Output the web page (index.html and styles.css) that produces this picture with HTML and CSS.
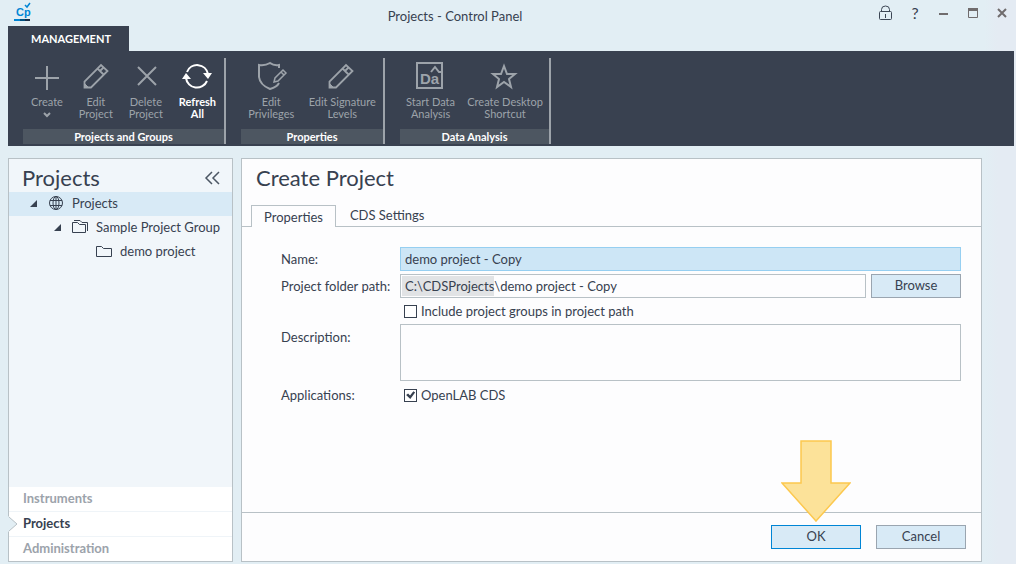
FILE: index.html
```
<!DOCTYPE html>
<html lang="en">
<head>
  <meta charset="UTF-8">
  <title>Projects - Control Panel</title>
  <link rel="stylesheet" href="styles.css">
</head>
<body>
  <header class="titlebar">
    <svg class="logo" width="18" height="18" viewBox="0 0 18 18">
      <text class="logoText" x="2" y="11">Cp</text>
      <path d="M11 0l2 2 3-4" fill="none" stroke="#0085d5" stroke-width="1.500"/>
      <path d="M0 14h16v2H0z" fill="#0085d5"/>
      <path d="M6 14h5v2H6z" fill="#00507f"/>
      <path d="M11 14h5v2h-5z" fill="#1a2c45"/>
    </svg>
    <div class="windowTitle">Projects - Control Panel</div>
    <div class="windowButtons">
      <button type="button" aria-label="Lock">
        <svg width="14" height="16" viewBox="0 0 14 16" fill="none" stroke="#3c4654">
          <rect x="1.500" y="6.500" width="12" height="8" rx="1"/>
          <path d="M3.500 6V4.500a4 3.500 0 0 1 8 0V6M7.500 9v4"/>
        </svg>
      </button>
      <button type="button" class="help" aria-label="Help">?</button>
      <button type="button" aria-label="Minimize">
        <svg width="12" height="12" viewBox="0 0 12 12"><path d="M1 6h9v2H1z" fill="#706c6d"/></svg>
      </button>
      <button type="button" aria-label="Maximize">
        <svg width="12" height="12" viewBox="0 0 12 12" fill="none" stroke="#706c6d"><path d="M1.500 1.500h9v9h-9z"/><path d="M1 2.500h10" stroke-width="3"/></svg>
      </button>
      <button type="button" aria-label="Close">
        <svg width="12" height="12" viewBox="0 0 12 12" stroke="#706c6d" stroke-width="2"><path d="M2 2l8 8M10 2l-8 8"/></svg>
      </button>
    </div>
  </header>

  <div class="ribbonTab">MANAGEMENT</div>
  <div class="ribbon">
    <section class="group">
      <div class="tools">
        <button type="button" class="tool">
          <svg width="28" height="28" viewBox="0 0 28 28"><path d="M14 4v24M2 16h24" stroke-width="2"/></svg>
          Create
          <svg class="caret" width="8" height="12" viewBox="0 0 8 12"><path d="M1 5l3 3 3-3" stroke-width="2"/></svg>
        </button>
        <button type="button" class="tool">
          <svg width="28" height="28" viewBox="0 0 28 28"><path d="M2.500 25.500v-6L19 3l6.500 6L9 25.500zM15.500 6.500l6 6M18 9l3-3" stroke-width="1.800"/><path d="M2.500 25.500v-4l4 4z" fill="#9da3aa"/></svg>
          Edit<br>Project
        </button>
        <button type="button" class="tool">
          <svg width="28" height="28" viewBox="0 0 28 28"><path d="M6 5l18 18M24 5L6 23" stroke-width="2"/></svg>
          Delete<br>Project
        </button>
        <button type="button" class="tool active">
          <svg width="28" height="28" viewBox="0 0 28 28"><path d="M4 10A11 11 0 0 1 25 12M24 19A11 11 0 0 1 3 16" stroke-width="2"/><path class="solid" d="M-1 17l4-6 5 6zM20 11h9l-4 6z"/></svg>
          Refresh<br>All
        </button>
      </div>
      <h2>Projects and Groups</h2>
    </section>
    <section class="group properties">
      <div class="tools">
        <button type="button" class="tool">
          <svg width="28" height="28" viewBox="0 0 28 28"><path d="M22 6V3Q17 4 13 1Q8 4 2 3V15Q3 23 13 27Q20 25 22 21" stroke-width="2"/><path d="M17 20l1-4 8-8 3 3-8 8zM24 10l3 3" stroke-width="1.500"/></svg>
          Edit<br>Privileges
        </button>
        <button type="button" class="tool">
          <svg width="28" height="28" viewBox="0 0 28 28"><path d="M1.500 25.500v-6L18 3l6.500 6L8 25.500zM14.500 6.500l6 6M17 9l3-3" stroke-width="1.800"/><path d="M1.500 25.500v-4l4 4z" fill="#9da3aa"/></svg>
          Edit Signature<br>Levels
        </button>
      </div>
      <h2>Properties</h2>
    </section>
    <section class="group analysis">
      <div class="tools">
        <button type="button" class="tool">
          <svg width="28" height="28" viewBox="0 0 28 28"><path d="M0 1h25v25H0zM14 10l4-5 4 5h3" stroke-width="2"/><text class="daText" x="3" y="22">Da</text></svg>
          Start Data<br>Analysis
        </button>
        <button type="button" class="tool">
          <svg width="28" height="28" viewBox="0 0 28 28"><path d="M13 4l3 8h8l-6 5 2 8-7-5-7 5 2-8-6-5h8z" stroke-width="2"/></svg>
          Create Desktop<br>Shortcut
        </button>
      </div>
      <h2>Data Analysis</h2>
    </section>
  </div>

  <div class="content">
    <aside class="sidebar">
      <div class="sidebarHeader">
        <h1>Projects</h1>
        <button type="button" class="collapse" aria-label="Collapse">
          <svg width="16" height="14" viewBox="0 0 16 14" fill="none" stroke="#4b5663" stroke-width="1.500"><path d="M8 1L2 7l6 6M15 1L9 7l6 6"/></svg>
        </button>
      </div>
      <ul class="tree">
        <li class="selected">
          <svg class="expander" width="8" height="8" viewBox="0 0 8 8"><path d="M8 1v7H1z"/></svg>
          <svg width="16" height="16" viewBox="0 0 16 16"><circle cx="8" cy="8" r="6.500"/><ellipse cx="8" cy="8" rx="3" ry="6.500"/><path d="M8 1v14M2 5.500h12M2 10.500h12"/></svg>
          <span>Projects</span>
        </li>
        <li class="level2">
          <svg class="expander" width="8" height="8" viewBox="0 0 8 8"><path d="M8 1v7H1z"/></svg>
          <svg width="16" height="16" viewBox="0 0 16 16"><path d="M.5 3.500h5l2 2h6v8H.5zM2 1.500h6l2 2h5.500V12"/></svg>
          <span>Sample Project Group</span>
        </li>
        <li class="level3">
          <svg width="16" height="16" viewBox="0 0 16 16"><path d="M.5 3.500h5l2 2h8v8H.5z"/></svg>
          <span>demo project</span>
        </li>
      </ul>
      <nav class="sections">
        <a href="#instruments">Instruments</a>
        <a href="#projects" class="current">
          <svg class="notch" width="11" height="16" viewBox="0 0 11 16"><path d="M0 0L9 8 0 16z" fill="#e2eef4"/><path d="M1 1l8 7-8 7" fill="none" stroke="#b8c1c6"/></svg>
          Projects
        </a>
        <a href="#administration">Administration</a>
      </nav>
    </aside>

    <main class="panel">
      <h1>Create Project</h1>
      <div class="tabs" role="tablist">
        <button type="button" role="tab" aria-selected="true" class="tab selected">Properties</button>
        <button type="button" role="tab" aria-selected="false" class="tab">CDS Settings</button>
      </div>
      <form class="form">
        <label for="name">Name:</label>
        <input class="field name" id="name" type="text" value="demo project - Copy">

        <label for="path">Project folder path:</label>
        <div class="pathRow">
          <div class="field path">
            <span>C:\CDSProjects</span>
            <input id="path" type="text" value="\demo project - Copy">
          </div>
          <button type="button" class="button">Browse</button>
        </div>

        <div class="check include">
          <input id="include" type="checkbox">
          <label for="include">Include project groups in project path</label>
        </div>

        <label class="descriptionLabel" for="description">Description:</label>
        <textarea class="field" id="description"></textarea>

        <span>Applications:</span>
        <div class="check">
          <input id="openlab" type="checkbox" checked>
          <label for="openlab">OpenLAB CDS</label>
        </div>
      </form>
      <footer class="actions">
        <div class="okBox">
          <svg class="pointer" width="70" height="82" viewBox="0 0 70 82"><path d="M20 1h30v42h19L35 81 1 43h19z" fill="#fce299" stroke="#fcc84e" stroke-width="1.500"/></svg>
          <button type="button" class="button primary">OK</button>
        </div>
        <button type="button" class="button">Cancel</button>
      </footer>
    </main>
  </div>
</body>
</html>
```
FILE: styles.css
```
* {
    box-sizing: border-box;
}

body {
    font-family: Lato, "Liberation Sans", sans-serif;
    font-size: 13px;
    line-height: 16px;
    color: #374150;
    margin: 0;
    min-height: 100vh;
    display: flex;
    flex-direction: column;
    background: linear-gradient(to left, #e4ebf3 18px, #e2eef4 32px);
}

h1, h2, ul {
    margin: 0;
    padding: 0;
}

h1 {
    font-size: 22px;
    line-height: 28px;
    font-weight: normal;
}

button, input, textarea {
    font: inherit;
    color: inherit;
}

button {
    padding: 0;
    border: none;
    background: none;
}

/* title bar */
.titlebar {
    display: flex;
    align-items: center;
    height: 26px;
    padding: 0 8px 0 14px;
}

.logo {
    margin-top: 2px;
    overflow: visible;
}

.logoText {
    font: bold 11px "Liberation Sans", sans-serif;
    fill: #0085d5;
}

.windowTitle {
    flex: 1;
    padding-top: 6px;
    text-align: center;
}

.windowButtons {
    display: flex;
    align-items: center;
    gap: 17px;
}

.windowButtons button {
    display: flex;
}

.help {
    font-size: 16px;
    width: 12px;
    justify-content: center;
}

/* ribbon */
.ribbonTab {
    align-self: flex-start;
    margin-left: 8px;
    padding: 5px 18px 4px 23px;
    font-size: 11px;
    font-weight: bold;
    color: white;
    background-color: #394150;
}

.ribbon {
    display: flex;
    gap: 15px;
    margin: 0 2px 12px 8px;
    padding: 7px 15px 2px;
    background-color: #394150;
}

.group {
    width: 203px;
    border-right: 2px solid #9da3aa;
}

.group.properties {
    width: 144px;
}

.group.analysis {
    width: 151px;
}

.group h2 {
    font-size: 11px;
    line-height: 15px;
    text-align: center;
    color: white;
    background-color: #4d5661;
}

.tools {
    display: flex;
    justify-content: space-around;
    height: 71px;
}

.tool {
    display: block;
    padding-top: 4px;
    font-size: 11px;
    line-height: 12px;
    white-space: nowrap;
    color: #9da3aa;
    align-self: flex-start;
}

.tool svg {
    display: block;
    margin: 0 auto 6px;
    overflow: visible;
    fill: none;
    stroke: #9da3aa;
}

.tool .caret {
    margin: 0 auto;
}

.tool.active {
    color: white;
    font-weight: bold;
}

.tool.active svg {
    stroke: white;
}

.tool .solid {
    fill: white;
    stroke: none;
}

.daText {
    font: bold 15px "Liberation Sans", sans-serif;
    fill: #9da3aa;
    stroke: none;
}

/* main area */
.content {
    flex: 1;
    display: flex;
    gap: 8px;
    padding: 0 34px 2px 8px;
}

.sidebar {
    display: flex;
    flex-direction: column;
    width: 225px;
    border: 1px solid #b8c1c6;
    background-color: #f1f6fa;
}

.sidebarHeader {
    display: flex;
    justify-content: space-between;
    align-items: center;
    padding: 5px 12px 0 13px;
}

.collapse {
    display: flex;
}

.tree {
    flex: 1;
    list-style: none;
}

.tree li {
    display: flex;
    align-items: center;
    gap: 8px;
    height: 24px;
    padding: 0 0 2px 19px;
}

.tree li.selected {
    background-color: #d8eaf6;
}

.tree li.level2 {
    padding-left: 43px;
}

.tree li.level3 {
    padding-left: 87px;
}

.tree svg {
    fill: none;
    stroke: #374150;
}

.tree .expander {
    margin: 0 3px 0 1px;
    fill: #374150;
    stroke: none;
}

.sections {
    background-color: white;
}

.sections a {
    display: block;
    position: relative;
    height: 25px;
    padding: 3px 14px;
    font-weight: bold;
    text-decoration: none;
    color: #9ca3ab;
    border-bottom: 1px solid #eff4f8;
}

.sections a:last-child {
    height: 24px;
    border-bottom: none;
}

.sections a.current {
    color: #374150;
}

.notch {
    position: absolute;
    left: -1px;
    top: 4px;
}

.panel {
    flex: 1;
    display: flex;
    flex-direction: column;
    border: 1px solid #b8c1c6;
    background-color: #fdfdfe;
}

.panel h1 {
    padding: 5px 14px 13px;
}

.tabs {
    display: flex;
    padding-left: 9px;
    border-bottom: 1px solid #b8c1c6;
}

.tab {
    height: 21px;
    padding: 0 14px 2px;
}

.tab.selected {
    height: 22px;
    padding: 0 12px;
    margin-bottom: -1px;
    border: 1px solid #b8c1c6;
    border-bottom: none;
    background-color: #fdfdfe;
}

.form {
    flex: 1;
    display: grid;
    grid-template-columns: 111px 1fr;
    column-gap: 8px;
    align-content: start;
    align-items: center;
    row-gap: 3px;
    padding: 20px 20px 0 39px;
    white-space: nowrap;
}

.field {
    width: 100%;
    height: 24px;
    padding: 0 4px;
    border: 1px solid #b8c1c6;
    border-radius: 0;
    background-color: #fdfdfe;
}

.field.name {
    border-color: #96cff1;
    background-color: #cde6f6;
}

.pathRow {
    display: flex;
    gap: 5px;
}

.field.path {
    flex: 1;
    display: flex;
    padding: 1px;
}

.path span {
    padding: 2px 0 2px 3px;
    background-color: #e1e3e5;
}

.path input {
    flex: 1;
    min-width: 0;
    padding: 0;
    border: none;
    background: none;
}

.button {
    width: 90px;
    height: 24px;
    padding-bottom: 2px;
    border: 1px solid #9aa5b0;
    background-color: #d8eaf6;
}

.button.primary {
    border-color: #0085d5;
}

.check {
    display: flex;
    align-items: center;
    gap: 4px;
    height: 22px;
    padding-left: 4px;
}

.check.include {
    grid-column: 2;
    height: 20px;
}

.check input {
    appearance: none;
    width: 13px;
    height: 13px;
    margin: 0;
    border: 1px solid #374150;
    background-color: white;
}

.check input:checked::before {
    content: "";
    display: block;
    width: 11px;
    height: 11px;
    background-color: #374150;
    clip-path: polygon(10% 50%, 28% 36%, 46% 54%, 76% 16%, 92% 28%, 48% 86%);
}

textarea.field {
    display: block;
    height: 57px;
    resize: none;
}

.descriptionLabel {
    align-self: start;
    padding-top: 5px;
}

.actions {
    display: flex;
    justify-content: flex-end;
    gap: 15px;
    padding: 12px 15px;
    border-top: 1px solid #b8c1c6;
}

.okBox {
    position: relative;
}

.pointer {
    position: absolute;
    left: 10px;
    bottom: 27px;
}
```
